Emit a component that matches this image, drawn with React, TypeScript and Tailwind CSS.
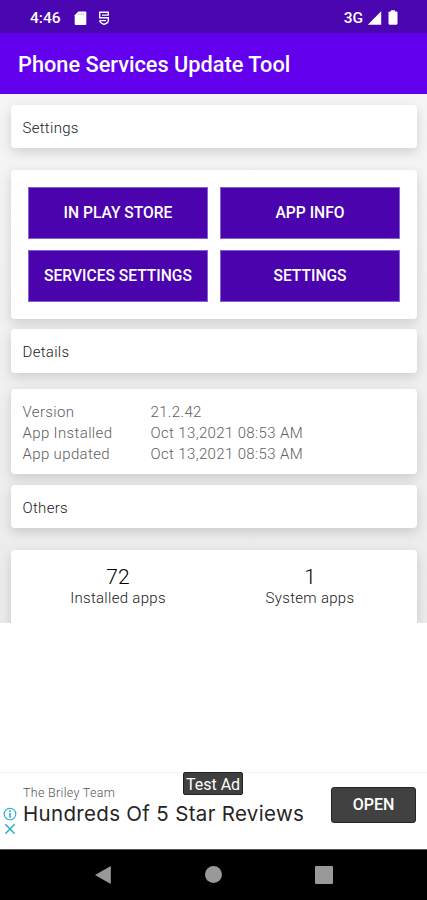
import type { ReactNode } from "react";

interface CardProps {
  children: ReactNode;
  className: string;
}

interface DetailTypes {
  label: string;
  value: string;
}

const actions = ["IN PLAY STORE", "APP INFO", "SERVICES SETTINGS", "SETTINGS"];

const details: DetailTypes[] = [
  { label: "Version", value: "21.2.42" },
  { label: "App Installed", value: "Oct 13,2021 08:53 AM" },
  { label: "App updated", value: "Oct 13,2021 08:53 AM" },
];

const stats: DetailTypes[] = [
  { label: "Installed apps", value: "72" },
  { label: "System apps", value: "1" },
];

const Card = ({ children, className }: CardProps) => (
  <section
    className={`shrink-0 rounded-[4px] bg-white shadow-[0_4px_12px_rgba(0,0,0,0.15)] ${className}`}
  >
    {children}
  </section>
);

const SectionTitle = ({ children, className }: CardProps) => (
  <Card className={`flex items-center px-[11.5px] pt-[2px] ${className}`}>
    <h2 className="text-[15px] font-light leading-5 tracking-[0.3px] text-[#202020]">{children}</h2>
  </Card>
);

const StatusBar = () => (
  <div className="flex h-[33px] shrink-0 items-center bg-[#4a06b0] pl-[30px] pr-[29px] pt-[3px] text-white">
    <span className="w-[44px] text-[15.5px] font-medium leading-5">4:46</span>
    <svg className="h-[15px] w-[13px]" viewBox="0 0 13 15" fill="currentColor">
      <path d="M4.3 .5H11.3Q12.3 .5 12.3 1.5V13Q12.3 14 11.3 14H1.7Q.7 14 .7 13V4.2Z" />
      <path d="M4.9 2V4M7.1 2V4M9.3 2V4" stroke="#b99be2" strokeWidth=".7" />
    </svg>
    <svg className="ml-[11px] h-[15px] w-[12px]" viewBox="0 0 12 15" fill="none" stroke="currentColor" strokeWidth="1.4">
      <path d="M10.3 4.5V1.3H1.7V6.8H10.3V10Q10.3 11.8 6 13.4Q1.7 11.8 1.7 9.5" />
      <path d="M4 4.2H10.3M1.7 9.6H8" strokeWidth="1.2" />
    </svg>
    <span className="ml-auto text-[15.5px] font-medium leading-5">3G</span>
    <svg className="ml-[4px] h-[15px] w-[15px]" viewBox="0 0 15 15" fill="currentColor">
      <path d="M14.2 .3V13.7H.8Z" />
    </svg>
    <svg className="ml-[6px] h-[16px] w-[10px]" viewBox="0 0 10 16" fill="currentColor">
      <path d="M3 .3H7V1.5H8.4Q9.5 1.5 9.5 2.6V13.6Q9.5 14.7 8.4 14.7H1.6Q.5 14.7 .5 13.6V2.6Q.5 1.5 1.6 1.5H3Z" />
    </svg>
  </div>
);

const AdBanner = () => (
  <div className="relative flex h-[77px] shrink-0 border-t border-[#f3f3f3] bg-white">
    <div className="flex w-[23px] flex-col items-center pr-[3px] pt-[34px] text-[#25a9cf]">
      <svg className="h-[14px] w-[14px] shrink-0" viewBox="0 0 14 14" fill="none" stroke="currentColor">
        <circle cx="7" cy="7" r="5.8" strokeWidth="1.1" />
        <path d="M7 3.3V4.9M7 6.1V10.7" strokeWidth="1.6" />
      </svg>
      <svg className="mt-[2px] h-[12px] w-[12px] shrink-0" viewBox="0 0 12 12" fill="none" stroke="currentColor" strokeWidth="1.4">
        <path d="M1.3 1.3L10.7 10.7M10.7 1.3L1.3 10.7" />
      </svg>
    </div>
    <div className="flex flex-col whitespace-nowrap pt-[12px]">
      <span className="text-[12.5px] font-light leading-4 tracking-[0.3px] text-[#555]">The Briley Team</span>
      <span className="mt-px font-['Inter',sans-serif] text-[20.5px] leading-6 tracking-[0.32px] text-[#252525]">
        Hundreds Of 5 Star Reviews
      </span>
    </div>
    <button className="ml-auto mr-[11px] mt-[14px] h-[36px] w-[85px] shrink-0 rounded-[3px] border border-[#252525] bg-[#414141] text-[16px] font-medium text-white">
      OPEN
    </button>
    <span className="absolute left-[183px] top-[-1px] h-[23px] w-[60px] whitespace-nowrap rounded-[2px] border border-[#222] bg-[#404040] text-center text-[16px] leading-[23px] text-white">
      Test Ad
    </span>
  </div>
);

const NavigationBar = () => (
  <nav className="flex h-[51px] shrink-0 items-center justify-between border-t border-[#555] bg-black px-[94px] pb-px text-[#999]">
    <svg className="h-[20px] w-[18px]" viewBox="0 0 18 20" fill="currentColor">
      <path d="M16.8 1V19L1 10Z" />
    </svg>
    <div className="h-[17px] w-[17px] rounded-full bg-[#999]" />
    <div className="h-[18px] w-[18px] rounded-[1px] bg-[#999]" />
  </nav>
);

const App = () => {
  return (
    <div className="flex h-[900px] w-[427px] flex-col overflow-hidden bg-white font-['Roboto',sans-serif]">
      <StatusBar />
      <header className="flex h-[61px] shrink-0 items-center bg-[#6200ee] pl-[18px] pt-[3px]">
        <h1 className="whitespace-nowrap text-[21.75px] font-medium leading-7 text-white">
          Phone Services Update Tool
        </h1>
      </header>

      <main className="flex h-[529px] shrink-0 flex-col overflow-hidden bg-linear-to-b from-[#f5f5f5] to-[#ebebeb] pl-[11px] pr-[10px] pt-[11px]">
        <SectionTitle className="h-[43px]">Settings</SectionTitle>

        <Card className="mt-[22px] h-[149px] px-[17px] pt-[17px]">
          <div className="grid grid-cols-2 gap-x-[12px] gap-y-[11px]">
            {actions.map((action) => (
              <button
                key={action}
                className="h-[52px] whitespace-nowrap border border-[#8064cb] bg-[#4a03ad] pt-[2px] text-[15.6px] font-medium text-white"
              >
                {action}
              </button>
            ))}
          </div>
        </Card>

        <SectionTitle className="mt-[10px] h-[44px]">Details</SectionTitle>

        <Card className="mt-[16px] h-[85px] px-[11.5px] pt-[13px]">
          {details.map((detail) => (
            <div
              key={detail.label}
              className="flex h-[21px] items-center text-[15px] font-light tracking-[0.36px] text-[#606060]"
            >
              <span className="w-[128px]">{detail.label}</span>
              <span>{detail.value}</span>
            </div>
          ))}
        </Card>

        <SectionTitle className="mt-[11px] h-[43px]">Others</SectionTitle>

        <Card className="mt-[22px] h-[90px] px-[11px] pt-[15px]">
          <div className="grid grid-cols-2 text-center">
            {stats.map((stat) => (
              <div key={stat.label} className="flex flex-col">
                <span className="text-[21px] font-light leading-6 text-black">{stat.value}</span>
                <span className="text-[15px] font-light leading-[18px] tracking-[0.3px] text-[#202020]">
                  {stat.label}
                </span>
              </div>
            ))}
          </div>
        </Card>
      </main>

      <div className="grow" />
      <AdBanner />
      <NavigationBar />
    </div>
  );
};

export default App;
